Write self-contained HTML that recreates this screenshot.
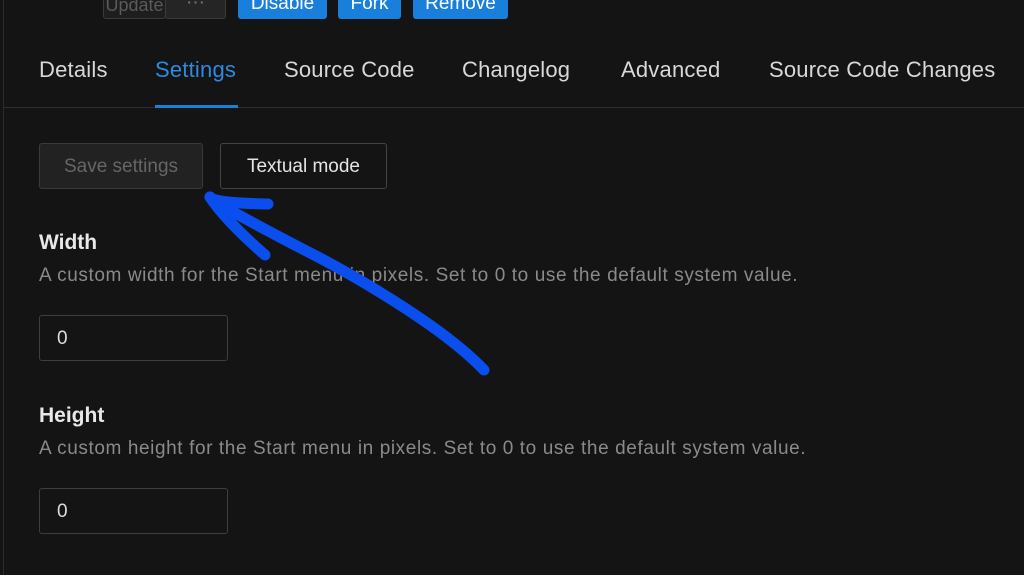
<!DOCTYPE html>
<html><head><style>
body{margin:0;width:1024px;height:575px;background:#141414;overflow:hidden;position:relative;font-family:"Liberation Sans",sans-serif;}
.a{position:absolute;}
.vl{left:3px;top:0;width:1px;height:575px;background:#2c2c2c;}
.btn{position:absolute;box-sizing:border-box;border-radius:3px;font-size:19px;text-align:center;white-space:nowrap;}
.blue{background:#1a7fdb;color:#fff;top:-8px;height:27px;line-height:24px;}
.tab{position:absolute;top:57px;font-size:22px;color:#d8d8d8;letter-spacing:0.2px;}
.h{position:absolute;left:39px;font-size:21px;font-weight:bold;color:#e8e8e8;}
.d{position:absolute;left:39px;font-size:19px;color:#8a8a8a;letter-spacing:0.6px;white-space:nowrap;}
.inp{position:absolute;left:39px;width:189px;height:46px;box-sizing:border-box;border:1px solid #3e3e3e;border-radius:3px;color:#ddd;font-size:19px;padding-left:17px;line-height:46px;}
</style></head><body>
<div class="a vl"></div>
<div class="btn" style="left:103px;top:-8px;width:63px;height:27px;border:1px solid #3a3a3a;background:#1e1e1e;color:#5a5a5a;line-height:24px;font-size:18px">Update</div>
<div class="btn" style="left:165px;top:-8px;width:61px;height:27px;border:1px solid #3a3a3a;background:#252525;color:#777;line-height:20px;">···</div>
<div class="btn blue" style="left:238px;width:89px;">Disable</div>
<div class="btn blue" style="left:338px;width:63px;">Fork</div>
<div class="btn blue" style="left:413px;width:95px;">Remove</div>
<div class="tab" style="left:39px">Details</div>
<div class="tab" style="left:155px;color:#2c8ae0">Settings</div>
<div class="tab" style="left:284px">Source Code</div>
<div class="tab" style="left:462px">Changelog</div>
<div class="tab" style="left:621px">Advanced</div>
<div class="tab" style="left:769px">Source Code Changes</div>
<div class="a" style="left:3px;top:107px;width:1021px;height:1px;background:#2e2e2e"></div>
<div class="a" style="left:155px;top:105px;width:83px;height:3px;background:#1a7fdb"></div>
<div class="btn" style="left:39px;top:143px;width:164px;height:46px;border:1px solid #3a3a3a;background:#222;color:#666;line-height:46px;">Save settings</div>
<div class="btn" style="left:220px;top:143px;width:167px;height:46px;border:1px solid #444;color:#e4e4e4;line-height:46px;">Textual mode</div>
<div class="h" style="top:231px">Width</div>
<div class="d" style="top:265px">A custom width for the Start menu in pixels. Set to 0 to use the default system value.</div>
<div class="inp" style="top:315px">0</div>
<div class="h" style="top:404px">Height</div>
<div class="d" style="top:438px">A custom height for the Start menu in pixels. Set to 0 to use the default system value.</div>
<div class="inp" style="top:488px">0</div>
<svg class="a" style="left:0;top:0" width="1024" height="575"><g fill="none" stroke="#0a4fee" stroke-width="11" stroke-linecap="round" stroke-linejoin="round">
<path d="M210 197 Q213 203 268 204"/>
<path d="M210 197 Q225 220 265 255"/>
<path d="M212 200 Q250 222 320 258 Q380 290 430 325 Q465 350 484 370"/>
</g></svg>
</body></html>
